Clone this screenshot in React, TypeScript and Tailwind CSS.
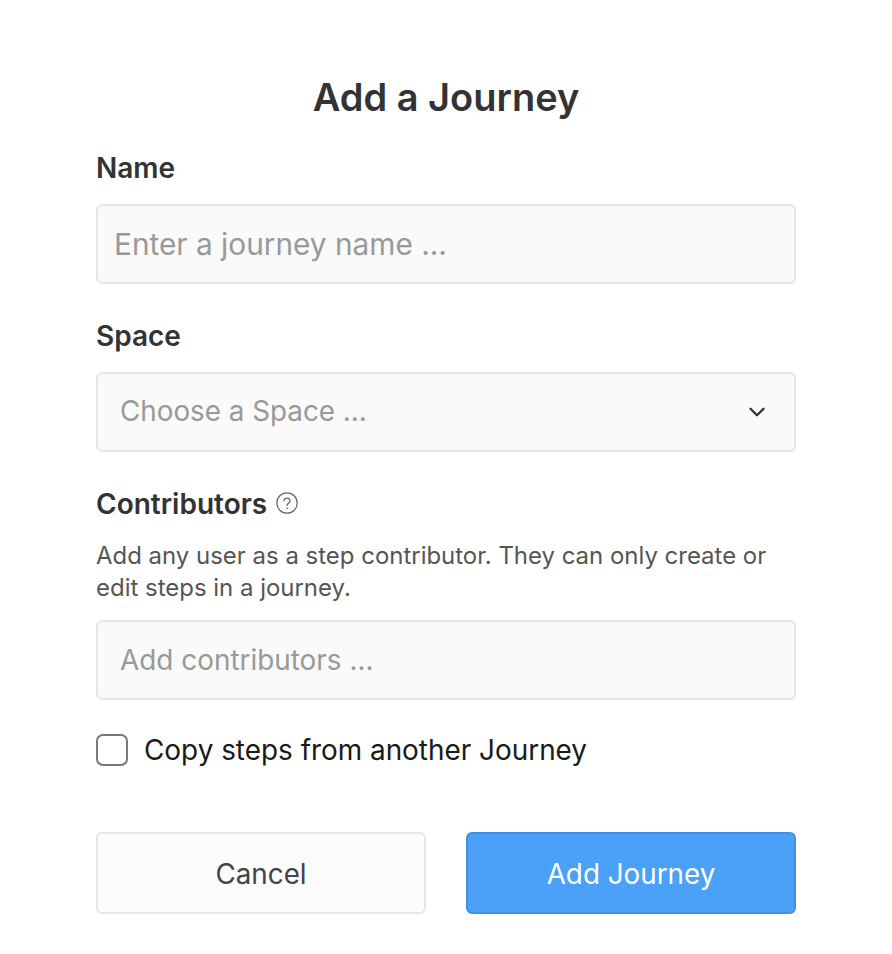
import React from 'react';
import { ChevronDown } from 'lucide-react';

const font = "font-['Inter','Noto_Sans',sans-serif]";

const fieldClass =
  'flex h-[80px] items-center rounded-[6px] border-2 border-[#e6e6e6] bg-[#fafafa] text-[#999999]';

export default function App() {
  return (
    <div className={`${font} min-h-[954px] bg-white px-[96px] pt-[72px] text-[#333333]`}>
      <h1 className="text-center text-[38px] leading-[50px] font-semibold">Add a Journey</h1>

      {/* Name */}
      <label className="mt-[28px] block text-[28px] leading-[36px] font-semibold">Name</label>
      <div className={`${fieldClass} mt-[18px] px-[16px] text-[29.8px]`}>Enter a journey name ...</div>

      {/* Space */}
      <label className="mt-[34px] block text-[28px] leading-[36px] font-semibold">Space</label>
      <div className={`${fieldClass} mt-[18px] justify-between pr-[24px] pl-[22px] text-[27.8px]`}>
        <span>Choose a Space ...</span>
        <ChevronDown className="h-[26px] w-[26px] text-[#333333]" strokeWidth={2.2} />
      </div>

      {/* Contributors */}
      <div className="mt-[34px] flex items-center gap-[8px]">
        <label className="text-[28px] leading-[36px] font-semibold">Contributors</label>
        <svg className="mb-[3px] h-[24px] w-[24px] text-[#666666]" viewBox="0 0 24 24" fill="none">
          <circle cx="12" cy="12" r="10.2" stroke="currentColor" strokeWidth="1.2" />
          <path
            d="M8.9 9.6a3.1 3.1 0 0 1 6.1.4c0 2-3 2.4-3 4.4"
            stroke="currentColor"
            strokeWidth="1.3"
            strokeLinecap="round"
          />
          <circle cx="12" cy="17.3" r="0.9" fill="currentColor" />
        </svg>
      </div>
      <p className="mt-[18px] text-[23.96px] leading-[32px] text-[#555555]">
        Add any user as a step contributor. They can only create or edit steps in a journey.
      </p>
      <div className={`${fieldClass} mt-[16px] px-[22px] pt-[1px] text-[27.9px]`}>Add contributors ...</div>

      {/* Copy steps */}
      <div className="mt-[34px] flex items-center gap-[16px]">
        <div className="h-[32px] w-[32px] rounded-[7px] border-2 border-[#77777f] bg-white" />
        <span className="text-[27.9px] leading-[32px] text-[#1a1a1a]">Copy steps from another Journey</span>
      </div>

      {/* Actions */}
      <div className="mt-[66px] flex gap-[40px]">
        <button className="flex h-[82px] flex-1 items-center justify-center rounded-[6px] border-2 border-[#e6e6e6] bg-[#fcfcfc] pt-[3px] text-[27.8px] text-[#444444]">
          Cancel
        </button>
        <button className="flex h-[82px] flex-1 items-center justify-center rounded-[6px] border-2 border-[#4490e0] bg-[#4aa1f7] pt-[3px] text-[27.8px] text-white">
          Add Journey
        </button>
      </div>
    </div>
  );
}
